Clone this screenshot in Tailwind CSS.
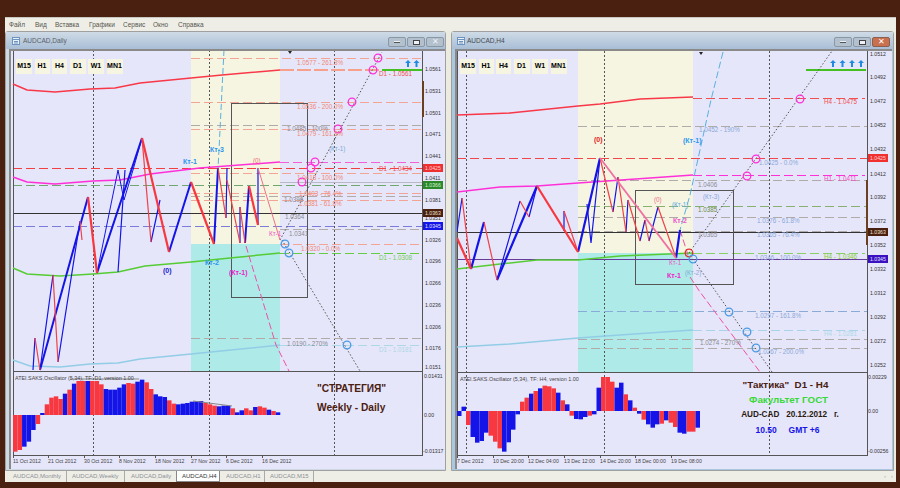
<!DOCTYPE html>
<html>
<head>
<meta charset="utf-8">
<script src="https://cdn.jsdelivr.net/npm/@tailwindcss/browser@4"></script>
</head>
<body class="bg-[#4a2010]">
<div class="w-[900px] h-[488px] pt-[17px] px-[5px] overflow-hidden font-['Liberation_Sans',sans-serif]">
  <div class="w-[891px] h-[465px] flex flex-col bg-[#ecebe0]">

    <!-- menu -->
    <div class="h-[14px] shrink-0 pl-[4px] flex items-center text-[6.5px] text-[#55554f] bg-[#efeee6] border-t border-[#c8c8c0]">
      <span class="w-[26px]">Файл</span>
      <span class="w-[20px]">Вид</span>
      <span class="w-[34px]">Вставка</span>
      <span class="w-[34px]">Графики</span>
      <span class="w-[30px]">Сервис</span>
      <span class="w-[25px]">Окно</span>
      <span>Справка</span>
    </div>

    <div class="flex-1 flex gap-[5px]">

      <!-- left window -->
      <div class="w-[441px] flex flex-col bg-[#cdd9e4] border border-[#a0a0a0] rounded-t-[3px]">
        <div class="h-[17px] shrink-0 flex items-center pl-[6px] pr-[1px] bg-gradient-to-b from-[#cfdbe6] to-[#a9bed6]">
          <svg width="8" height="8" viewBox="0 0 8 8" class="mr-[3px]"><rect x=".5" y=".5" width="7" height="7" fill="#e8f0f8" stroke="#6d93c0"/><path d="M1 2.5H7M2 4.5H6M2 6H6" stroke="#6d93c0"/></svg>
          <span class="text-[6.5px] text-[#5a6068]">AUDCAD,Daily</span>
          <div class="ml-auto mt-[3px] flex gap-[1px]">
            <div class="w-[18px] h-[10px] flex items-center justify-center bg-[#b3c0cd] border border-[#8b97a3] rounded-[2px]"><div class="w-[6px] h-[2px] bg-[#eef2f6] border-b border-[#555]"></div></div>
            <div class="w-[18px] h-[10px] flex items-center justify-center bg-[#b3c0cd] border border-[#8b97a3] rounded-[2px]"><div class="w-[7px] h-[5px] border border-[#444] bg-[#eef2f6]"></div></div>
            <div class="w-[18px] h-[10px] flex items-center justify-center bg-[#b3c0cd] border border-[#8b97a3] rounded-[2px] text-[8px] leading-none text-[#eef2f6]">✕</div>
          </div>
        </div>
        <div class="relative flex-1 ml-[3px] mb-[1px] bg-[#e6e6fa] border-l-2 border-t-2 border-[#8a8a8a]">
          <div class="absolute left-[5px] top-[8px] flex gap-[2.5px] text-[7px] font-bold text-black">
            <span class="w-[16px] h-[15px] flex items-center justify-center bg-[#f5f5e2]">M15</span>
            <span class="w-[15px] h-[15px] flex items-center justify-center bg-[#f5f5e2]">H1</span>
            <span class="w-[15px] h-[15px] flex items-center justify-center bg-[#f5f5e2]">H4</span>
            <span class="w-[16px] h-[15px] flex items-center justify-center bg-[#f5f5e2]">D1</span>
            <span class="w-[16px] h-[15px] flex items-center justify-center bg-[#f5f5e2]">W1</span>
            <span class="w-[16px] h-[15px] flex items-center justify-center bg-[#f5f5e2]">MN1</span>
          </div>
          <svg width="434" height="418" viewBox="11 51 434 418" class="block" fill="none">
            <rect x="191" y="50" width="89" height="194" fill="#f5f5e2"/>
            <rect x="191" y="244" width="89" height="127" fill="#aeeae8"/>

            <g shape-rendering="crispEdges">
              <path d="M93 50V455M209 50V455M334 50V455" stroke="#555" stroke-dasharray="2 2"/>
              <path d="M191 58H422M191 102H422M191 129H422M191 173H422M191 193H422M191 200H422M280 244H422" stroke="#f3a595" stroke-dasharray="9 4"/>
              <path d="M280 70H382" stroke="#f7a08c" stroke-width="2" stroke-dasharray="14 3"/>
              <path d="M191 125H422M191 196H422M280 229H422M191 338H422" stroke="#b0aba8" stroke-dasharray="9 4"/>
              <path d="M280 182H422" stroke="#b9b9c4"/>
              <path d="M280 162H422" stroke="#f25fd6" stroke-dasharray="9 4"/>
              <path d="M13 168H422" stroke="#f04040" stroke-dasharray="9 4"/>
              <path d="M13 185H422" stroke="#6fa86f" stroke-dasharray="9 4"/>
              <path d="M13 213H422" stroke="#333"/>
              <path d="M13 226H422" stroke="#7c7cd8" stroke-dasharray="9 4"/>
              <path d="M280 253H422" stroke="#66cc44" stroke-dasharray="9 4"/>
              <path d="M280 345H422" stroke="#add8e6" stroke-dasharray="9 4"/>
              <path d="M382 70H422" stroke="#44c022" stroke-width="2"/>
              <rect x="231.5" y="103.5" width="76" height="194" stroke="#555"/>
              <path d="M13 50V455H422.5V50M13 371.5H422.5" stroke="#555" stroke-width="1"/>
              <path d="M422.5 81V117" stroke="#6a4020" stroke-width="2"/>
              <path d="M13 455v3M48 455v3M84 455v3M119 455v3M155 455v3M191 455v3M226 455v3M262 455v3" stroke="#555"/>
            </g>

            <path d="M13 84L27 90L55 92L90 89L115 88L140 83L191 78L222 75L280 70" stroke="#f83848" stroke-width="1.600"/>
            <path d="M13 177L27 182L55 184L93 181L120 180L150 174L200 168L280 162" stroke="#ff30d8" stroke-width="1.600"/>
            <path d="M13 268L27 274L60 276L93 274L118 272L145 266L191 262L230 258L280 253" stroke="#55cc33" stroke-width="1.5"/>
            <path d="M13 360L30 366L60 367L90 364L118 363L140 359L191 354L280 345" stroke="#92cde6" stroke-width="1.5"/>

            <path d="M224 50L222 90L219 150L218 168" stroke="#5ab0e0" stroke-dasharray="6 3"/>
            <path d="M246 246L276 345L289 371" stroke="#ef4fa5" stroke-dasharray="7 3"/>
            <path d="M280 240L382 52M282 240L360 371" stroke="#555" stroke-dasharray="1.5 2"/>

            <!-- price swings -->
            <path d="M33 370L35 338M53 275L40 370M58 362L80 221M118 272L125 170M151 242L160 200M226 218L227 168M240 243L240 207M258 225L258 168" stroke="#1414e8" stroke-width="1.2"/>
            <path d="M97 273L118 170L124 200L133 170L142 138" stroke="#1414e8" stroke-width="1"/>
            <path d="M40 370L88 197M97 273L142 138M169 252L191 182M214 244L218 168M245 243L249 186" stroke="#1414e8" stroke-width="2"/>
            <path d="M35 338L40 370M53 275L58 362M80 221L82 240M142 138L151 242M218 168L226 218M227 180L240 243M240 207L245 243" stroke="#f04048" stroke-width="1.2"/>
            <path d="M88 197L97 273M142 138L169 252M191 182L214 244M249 186L258 225" stroke="#f83840" stroke-width="2.2"/>
            <path d="M258 168L280 240" stroke="#f07088" stroke-width="1"/>

            <g stroke-width="1.3">
              <g stroke="#ff30d8"><circle cx="378" cy="58" r="3.8"/><circle cx="373" cy="70" r="3.8"/><circle cx="352" cy="102" r="3.8"/><circle cx="338" cy="129" r="3.8"/><circle cx="315" cy="162" r="3.8"/><circle cx="311" cy="168" r="3.8"/><circle cx="302" cy="182" r="3.8"/></g>
              <g stroke="#4a9ae8"><circle cx="285" cy="244" r="3.8"/><circle cx="289" cy="253" r="3.8"/><circle cx="347" cy="345" r="3.8"/></g>
            </g>

            <path d="M288 51h4l-2 3z" fill="#222"/>
            <path d="M408 60l3 3h-2v4h-2v-4h-2zM416.500 60l3 3h-2v4h-2v-4h-2z" fill="#1e8ae0"/>

            <g fill="#f08878" stroke="none" font-size="6.300">
              <text x="297" y="65">1.0577 - 261.8%</text>
              <text x="297" y="109">1.0536 - 200.0%</text>
              <text x="297" y="136">1.0479 - 161.8%</text>
              <text x="297" y="180">1.0418 - 100.0%</text>
              <text x="299" y="196">1.0403 - 76.4%</text>
              <text x="299" y="206">1.0381 - 61.8%</text>
              <text x="301" y="251">1.0320 - 0.0%</text>
            </g>
            <g fill="#8a8a92" stroke="none" font-size="6.300">
              <text x="287" y="131">1.0485 - 100%</text>
              <text x="284" y="202">1.0396</text>
              <text x="285" y="219">1.0364</text>
              <text x="289" y="236">1.0341</text>
              <text x="287" y="346">1.0190 - 270%</text>
            </g>
            <g stroke="none" font-size="6.300">
              <text x="379" y="76" fill="#f05050">D1 - 1.0561</text>
              <text x="379" y="171" fill="#f05050">D1 - 1.0434</text>
              <text x="379" y="260" fill="#72cc55">D1 - 1.0308</text>
              <text x="379" y="352" fill="#add8e6">D1 - 1.0181</text>
              <text x="329" y="151" fill="#7aaad8">(Кт-1)</text>
              <text x="253" y="163" fill="#f07070">(0)</text>
              <text x="269" y="236" fill="#ee55c8">Кт-1</text>
            </g>
            <g stroke="none" font-size="7" font-weight="bold">
              <text x="183" y="164" fill="#2a96ee">Кт-1</text>
              <text x="210" y="152" fill="#2a96ee">Кт-3</text>
              <text x="205" y="265" fill="#2a96ee">Кт-2</text>
              <text x="229" y="275" fill="#ee22c8">(Кт-1)</text>
              <text x="163" y="273" fill="#2222cc">(0)</text>
            </g>

            <g fill="#333" stroke="none" font-size="5.200">
              <text x="425" y="71">1.0561</text>
              <text x="425" y="93">1.0531</text>
              <text x="425" y="115">1.0501</text>
              <text x="425" y="136">1.0471</text>
              <text x="425" y="158">1.0441</text>
              <text x="425" y="180">1.0411</text>
              <text x="425" y="202">1.0381</text>
              <text x="425" y="220">1.0351</text>
              <text x="425" y="242">1.0326</text>
              <text x="425" y="263">1.0296</text>
              <text x="425" y="285">1.0266</text>
              <text x="425" y="307">1.0236</text>
              <text x="425" y="329">1.0206</text>
              <text x="425" y="350">1.0176</text>
              <text x="425" y="369">1.0151</text>
              <text x="424" y="378">0.01431</text>
              <text x="424" y="417">0.00</text>
              <text x="423" y="453">-0.01317</text>
            </g>
            <g stroke="none" font-size="5.200">
              <rect x="423" y="164" width="20" height="8" fill="#f03030"/><text x="425" y="170" fill="#ffd0d0">1.0425</text>
              <rect x="423" y="181" width="20" height="8" fill="#2a8a2a"/><text x="425" y="187" fill="#d8f0d8">1.0366</text>
              <rect x="423" y="209" width="20" height="8" fill="#4a2010"/><text x="425" y="215" fill="#f0e0d0">1.0363</text>
              <rect x="423" y="222" width="20" height="8" fill="#1414e8"/><text x="425" y="228" fill="#e0e0ff">1.0345</text>
            </g>

            <g id="oscL"></g>
            <path d="M70 379H139M193 401L232 406" stroke="#888" stroke-width="1"/>
            <text x="15" y="380" fill="#444" font-size="5.400" stroke="none">ATEI.SAKS.Oscillator (5,34), TF: D1, version 1.00</text>
            <g fill="#4a2010" stroke="none" font-weight="bold" font-size="10.200">
              <text x="317" y="392">"СТРАТЕГИЯ"</text>
              <text x="317" y="411">Weekly - Daily</text>
            </g>
            <g fill="#444" stroke="none" font-size="5.200">
              <text x="13" y="463">11 Oct 2012</text>
              <text x="48" y="463">21 Oct 2012</text>
              <text x="84" y="463">30 Oct 2012</text>
              <text x="119" y="463">8 Nov 2012</text>
              <text x="155" y="463">18 Nov 2012</text>
              <text x="191" y="463">27 Nov 2012</text>
              <text x="226" y="463">6 Dec 2012</text>
              <text x="262" y="463">16 Dec 2012</text>
            </g>
          </svg>
        </div>
      </div>

      <!-- right window -->
      <div class="w-[443px] flex flex-col bg-[#a9c8e0] border border-[#a0a0a0] rounded-t-[3px]">
        <div class="h-[17px] shrink-0 flex items-center pl-[5px] pr-[3px] bg-gradient-to-b from-[#cfdbe6] to-[#a9bed6]">
          <svg width="8" height="8" viewBox="0 0 8 8" class="mr-[2px]"><rect x=".5" y=".5" width="7" height="7" fill="#e8f0f8" stroke="#6d93c0"/><path d="M1 2.5H7M2 4.5H6M2 6H6" stroke="#6d93c0"/></svg>
          <span class="text-[6.5px] text-[#444a50]">AUDCAD,H4</span>
          <div class="ml-auto mt-[3px] flex gap-[1px]">
            <div class="w-[18px] h-[10px] flex items-center justify-center bg-[#b3c0cd] border border-[#8b97a3] rounded-[2px]"><div class="w-[6px] h-[2px] bg-[#eef2f6] border-b border-[#555]"></div></div>
            <div class="w-[18px] h-[10px] flex items-center justify-center bg-[#b3c0cd] border border-[#8b97a3] rounded-[2px]"><div class="w-[7px] h-[5px] border border-[#444] bg-[#eef2f6]"></div></div>
            <div class="w-[18px] h-[10px] flex items-center justify-center bg-[#c9704f] border border-[#8b6050] rounded-[2px] text-[8px] leading-none text-white">✕</div>
          </div>
        </div>
        <div class="relative flex-1 ml-[3px] mr-[1px] mb-[1px] bg-[#e6e6fa] border-l-2 border-t-2 border-[#8a8a8a]">
          <div class="absolute left-[3px] top-[8px] flex gap-[2.5px] text-[7px] font-bold text-black">
            <span class="w-[16px] h-[15px] flex items-center justify-center bg-[#f5f5e2]">M15</span>
            <span class="w-[15px] h-[15px] flex items-center justify-center bg-[#f5f5e2]">H1</span>
            <span class="w-[15px] h-[15px] flex items-center justify-center bg-[#f5f5e2]">H4</span>
            <span class="w-[16px] h-[15px] flex items-center justify-center bg-[#f5f5e2]">D1</span>
            <span class="w-[16px] h-[15px] flex items-center justify-center bg-[#f5f5e2]">W1</span>
            <span class="w-[16px] h-[15px] flex items-center justify-center bg-[#f5f5e2]">MN1</span>
          </div>
          <svg width="435" height="418" viewBox="457 51 435 418" class="block" fill="none">
            <rect x="578" y="51" width="115" height="202" fill="#f5f5e2"/>
            <rect x="578" y="253" width="115" height="119" fill="#aeeae8"/>

            <g shape-rendering="crispEdges">
              <path d="M466 51V455M604 51V455M769 51V455" stroke="#555" stroke-dasharray="2 2"/>
              <path d="M578 126H867M578 180H867M578 217H867M578 231H867M578 339H867M578 348H867" stroke="#b0aba8" stroke-dasharray="9 4"/>
              <path d="M457 158H867" stroke="#f04848" stroke-dasharray="9 4"/>
              <path d="M693 98H865" stroke="#f05050" stroke-dasharray="9 4"/>
              <path d="M693 175H865" stroke="#ff30d8" stroke-dasharray="9 4"/>
              <path d="M578 206H867" stroke="#88b070" stroke-dasharray="9 4"/>
              <path d="M693 253H865" stroke="#88d066" stroke-dasharray="9 4"/>
              <path d="M578 311H867" stroke="#8aaad8" stroke-dasharray="9 4"/>
              <path d="M693 330H865" stroke="#a8d4ea" stroke-dasharray="9 4"/>
              <path d="M457 232H867" stroke="#333"/>
              <path d="M457 259H867" stroke="#6a3a9a"/>
              <path d="M806 70H866" stroke="#44c022" stroke-width="2"/>
              <rect x="635.500" y="190.500" width="98" height="94" stroke="#555"/>
              <path d="M457.500 51V455H867V51M457 372H867" stroke="#555" stroke-width="1"/>
              <path d="M867 180V245" stroke="#6a4020" stroke-width="2"/>
              <path d="M457 455v3M493 455v3M528 455v3M564 455v3M600 455v3M635 455v3M671 455v3" stroke="#555"/>
            </g>

            <path d="M457 115L510 113L578 106L600 104L640 99L693 97" stroke="#f83848" stroke-width="1.600"/>
            <path d="M457 192L500 187L537 186L578 183L650 178L693 175" stroke="#ff30d8" stroke-width="1.600"/>
            <path d="M457 269L500 264L537 260L578 260L620 256L693 253" stroke="#55cc33" stroke-width="1.5"/>
            <path d="M457 347L510 344L578 338L620 335L693 330" stroke="#92cde6" stroke-width="1.5"/>

            <path d="M723 52L711 100L700 150L690 195L680 230" stroke="#5ab0e0" stroke-dasharray="7 3"/>
            <path d="M680 230L688 255M690 277L700 292L760 372" stroke="#ef4fa5" stroke-dasharray="7 3"/>
            <path d="M689 253L832 51M693 259L772 372" stroke="#555" stroke-dasharray="1.5 2"/>

            <path d="M457 232L462 198M520 201L497 280M529 217L537 186M564 231L564 211M587 204L591 243L600 158M613 212L618 177M626 232L628 200M640 241L645 220M649 241L658 207" stroke="#1414e8" stroke-width="1.2"/>
            <path d="M471 269L484 222M497 280L537 186M578 252L600 158M676 258L680 230" stroke="#1414e8" stroke-width="2.200"/>
            <path d="M462 198L471 269M484 222L497 280M520 201L529 217M564 211L578 252M600 158L613 212M618 177L626 232M628 200L640 241M645 220L649 241M658 207L676 258" stroke="#f04048" stroke-width="1.200"/>
            <path d="M457 238L471 269M537 186L578 252" stroke="#f83840" stroke-width="2.200"/>
            <path d="M600 158L676 258" stroke="#f070a0" stroke-width="1.800"/>

            <g stroke-width="1.3">
              <g stroke="#ff30d8"><circle cx="800" cy="99" r="3.8"/><circle cx="756" cy="159" r="3.8"/><circle cx="747" cy="176" r="3.8"/></g>
              <circle cx="689" cy="253" r="3.8" stroke="#e03030"/>
              <g stroke="#4a9ae8"><circle cx="693" cy="259" r="3.8"/><circle cx="729" cy="312" r="3.8"/><circle cx="747" cy="332" r="3.8"/><circle cx="756" cy="348" r="3.8"/></g>
            </g>

            <path d="M699 52h4l-2 3z" fill="#222"/>
            <path d="M833 60l3 3h-2v4h-2v-4h-2zM842.500 60l3 3h-2v4h-2v-4h-2zM852 60l3 3h-2v4h-2v-4h-2zM861 60l3 3h-2v4h-2v-4h-2z" fill="#1e8ae0"/>

            <g fill="#8aa8d8" stroke="none" font-size="6.300">
              <text x="699" y="132">1.0452 - 190%</text>
              <text x="759" y="165">1.0425 - 0.0%</text>
              <text x="757" y="223">1.0376 - 61.8%</text>
              <text x="757" y="237">1.0365 - 76.4%</text>
              <text x="755" y="260">1.0346 - 100.0%</text>
              <text x="755" y="318">1.0297 - 161.8%</text>
              <text x="758" y="354">1.0267 - 200.0%</text>
              <text x="703" y="199">(Кт-3)</text>
              <text x="685" y="275">(Кт-2)</text>
            </g>
            <g fill="#8a8a92" stroke="none" font-size="6.300">
              <text x="698" y="187">1.0406</text>
              <text x="698" y="237">1.0365</text>
              <text x="700" y="345">1.0274 - 270%</text>
            </g>
            <g stroke="none" font-size="6.300">
              <text x="698" y="212" fill="#6a8a40">1.0385</text>
              <text x="824" y="104" fill="#f05050">H4 - 1.0475</text>
              <text x="824" y="181" fill="#f050c8">H1 - 1.0411</text>
              <text x="824" y="259" fill="#88cc33">H4 - 1.0346</text>
              <text x="824" y="336" fill="#add8e6">H4 - 1.0281</text>
              <text x="654" y="202" fill="#f07088">(0)</text>
              <text x="672" y="207" fill="#5aaae0">(Кт-1)</text>
              <text x="669" y="265" fill="#ee55c8">Кт-1</text>
            </g>
            <g stroke="none" font-size="7" font-weight="bold">
              <text x="594" y="142" fill="#e82020">(0)</text>
              <text x="683" y="143" fill="#2a96ee">(Кт-1)</text>
              <text x="673" y="223" fill="#ee55c8">Кт-2</text>
              <text x="667" y="278" fill="#ee22c8">Кт-1</text>
            </g>

            <g fill="#333" stroke="none" font-size="5.200">
              <text x="870" y="56">1.0512</text>
              <text x="870" y="79">1.0492</text>
              <text x="870" y="103">1.0472</text>
              <text x="870" y="127">1.0452</text>
              <text x="870" y="151">1.0432</text>
              <text x="870" y="176">1.0412</text>
              <text x="870" y="199">1.0392</text>
              <text x="870" y="223">1.0372</text>
              <text x="870" y="247">1.0352</text>
              <text x="870" y="271">1.0332</text>
              <text x="870" y="295">1.0312</text>
              <text x="870" y="319">1.0292</text>
              <text x="870" y="343">1.0272</text>
              <text x="870" y="367">1.0252</text>
              <text x="868" y="379">0.00229</text>
              <text x="868" y="413">0.00</text>
              <text x="868" y="453">-0.00256</text>
            </g>
            <g stroke="none" font-size="5.200">
              <rect x="868" y="154" width="20" height="8" fill="#f03030"/><text x="870" y="160" fill="#ffd0d0">1.0425</text>
              <rect x="868" y="228" width="20" height="8" fill="#4a2010"/><text x="870" y="234" fill="#f0e0d0">1.0363</text>
              <rect x="868" y="255" width="20" height="8" fill="#3a10c0"/><text x="870" y="261" fill="#e0e0ff">1.0345</text>
            </g>

            <g id="oscR"></g>
            <text x="460" y="381" fill="#444" font-size="5.400" stroke="none">ATEI.SAKS.Oscillator (5,34), TF: H4, version 1.00</text>
            <g stroke="none" font-weight="bold" text-anchor="middle">
              <text x="785.500" y="388" font-size="9.800" fill="#4a2010" xml:space="preserve">"Тактика"  D1 - H4</text>
              <text x="788.500" y="403" font-size="9.800" fill="#38d838">Факультет ГОСТ</text>
              <text x="790" y="417" font-size="8.200" fill="#2a1a10" xml:space="preserve">AUD-CAD   20.12.2012   г.</text>
              <text x="787.500" y="433" font-size="8.500" fill="#1414e8" xml:space="preserve">10.50     GMT +6</text>
            </g>
            <g fill="#444" stroke="none" font-size="5.200">
              <text x="457" y="463">7 Dec 2012</text>
              <text x="493" y="463">10 Dec 20:00</text>
              <text x="528" y="463">12 Dec 04:00</text>
              <text x="564" y="463">13 Dec 12:00</text>
              <text x="600" y="463">14 Dec 20:00</text>
              <text x="635" y="463">18 Dec 00:00</text>
              <text x="671" y="463">19 Dec 08:00</text>
            </g>
          </svg>
        </div>
      </div>
    </div>

    <!-- tabs -->
    <div class="h-[11px] shrink-0 flex items-stretch text-[6px] text-[#8a8f98] bg-[#efeee6]">
      <span class="w-[62px] pl-[8px] flex items-center border-r border-[#aaa]">AUDCAD,Monthly</span>
      <span class="w-[58px] pl-[5px] flex items-center border-r border-[#aaa]">AUDCAD,Weekly</span>
      <span class="w-[51px] pl-[6px] flex items-center">AUDCAD,Daily</span>
      <span class="w-[44px] pl-[5px] flex items-center bg-white text-[#333] border-x border-b border-[#888]">AUDCAD,H4</span>
      <span class="w-[45px] pl-[6px] flex items-center border-r border-[#aaa]">AUDCAD,H1</span>
      <span class="w-[49px] pl-[5px] flex items-center border-r border-[#aaa]">AUDCAD,M15</span>
      <span class="ml-auto mr-[3px] flex items-center gap-[5px] text-[#aaa]"><span>‹</span><span>›</span></span>
    </div>
  </div>
</div>

<script>
// oscillator bars: r/b + height in px, positive is up
const RED = '#f83840', BLUE = '#1414e8';
function bars(id, x0, step, base, data) {
  const g = document.getElementById(id);
  data.forEach((v, i) => {
    const h = Math.abs(v[1]) / 3;
    const r = document.createElementNS('http://www.w3.org/2000/svg', 'rect');
    r.setAttribute('x', x0 + i * step);
    r.setAttribute('y', v[1] > 0 ? base - h : base);
    r.setAttribute('width', step);
    r.setAttribute('height', h);
    r.setAttribute('fill', v[0] === 'r' ? RED : BLUE);
    g.appendChild(r);
  });
}
const parse = s => s.trim().split(/\s+/).map(t => [t[0], parseFloat(t.slice(1))]);

bars('oscL', 13, 4.53, 415, parse(`
  r-110 r-105 b-95 b-80 b-45 r-27 b6 r32 r52 r56 r48 b64 r76 b94 r102 r102 b102 r102 r102 r92
  b78 b76 b76 b82 b92 r96 r94 b100 b106 r98 r78 b62 b56 b54 r44 r34 b32 b34 b36 b40 b42 b42
  r36 r32 r28 b26 b28 b28 r20 b8 b14 r20 r14 b24 r26 r22 b16 r12 b8`));

bars('oscR', 457, 4.5, 411, parse(`
  b-15 b13 r-42 b-78 b-95 b-90 b-65 r-74 r-92 r-112 b-122 b-94 b-56 b-10 r28 r40 b52 r60 b68 r76
  r74 r68 b55 r32 b20 r-14 b-24 b-25 b-18 r-14 b-10 b70 r102 r102 r88 b70 b85 r50 b32 r10 b-8
  r-26 b-40 b-50 b-40 r-38 b-28 r-35 r-48 b-65 b-68 r-62 r-62 b-50`));
</script>
</body>
</html>
